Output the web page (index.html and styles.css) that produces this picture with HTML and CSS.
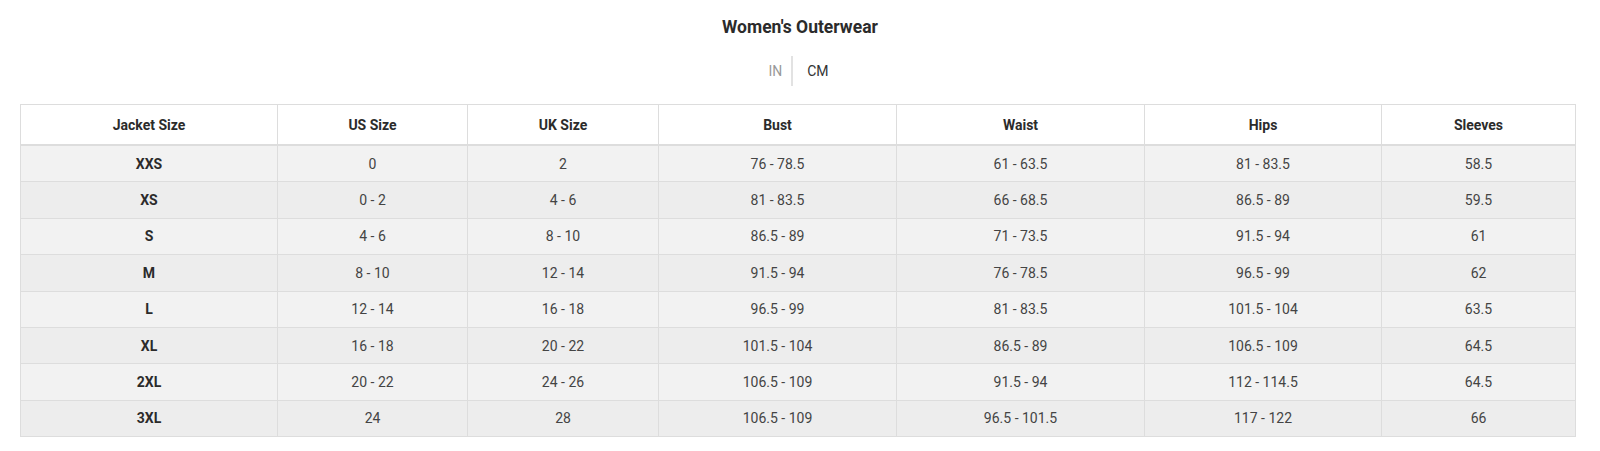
FILE: index.html
```html
<!DOCTYPE html>
<html>
<head>
<meta charset="utf-8">
<link rel="stylesheet" href="styles.css">
</head>
<body>
<div class="page">
  <h2 class="title">Women's Outerwear</h2>
  <div class="units">
    <span class="unit unit-off">IN</span>
    <span class="unit unit-on">CM</span>
  </div>
  <table class="chart">
    <colgroup>
      <col class="c1"><col class="c2"><col class="c3"><col class="c4"><col class="c5"><col class="c6"><col class="c7">
    </colgroup>
    <thead>
      <tr><th>Jacket Size</th><th>US Size</th><th>UK Size</th><th>Bust</th><th>Waist</th><th>Hips</th><th>Sleeves</th></tr>
    </thead>
    <tbody>
      <tr><th>XXS</th><td>0</td><td>2</td><td>76 - 78.5</td><td>61 - 63.5</td><td>81 - 83.5</td><td>58.5</td></tr>
      <tr><th>XS</th><td>0 - 2</td><td>4 - 6</td><td>81 - 83.5</td><td>66 - 68.5</td><td>86.5 - 89</td><td>59.5</td></tr>
      <tr><th>S</th><td>4 - 6</td><td>8 - 10</td><td>86.5 - 89</td><td>71 - 73.5</td><td>91.5 - 94</td><td>61</td></tr>
      <tr><th>M</th><td>8 - 10</td><td>12 - 14</td><td>91.5 - 94</td><td>76 - 78.5</td><td>96.5 - 99</td><td>62</td></tr>
      <tr><th>L</th><td>12 - 14</td><td>16 - 18</td><td>96.5 - 99</td><td>81 - 83.5</td><td>101.5 - 104</td><td>63.5</td></tr>
      <tr><th>XL</th><td>16 - 18</td><td>20 - 22</td><td>101.5 - 104</td><td>86.5 - 89</td><td>106.5 - 109</td><td>64.5</td></tr>
      <tr><th>2XL</th><td>20 - 22</td><td>24 - 26</td><td>106.5 - 109</td><td>91.5 - 94</td><td>112 - 114.5</td><td>64.5</td></tr>
      <tr><th>3XL</th><td>24</td><td>28</td><td>106.5 - 109</td><td>96.5 - 101.5</td><td>117 - 122</td><td>66</td></tr>
    </tbody>
  </table>
</div>
</body>
</html>
```
FILE: styles.css
```css
html, body {
  margin: 0;
  padding: 0;
  background: #fff;
}
body {
  font-family: Roboto, "Liberation Sans", sans-serif;
  color: #333;
}
.page {
  padding: 16px 20px 0 20px;
  display: flex;
  flex-direction: column;
  align-items: center;
}
.title {
  margin: 0;
  font-size: 17.5px;
  font-weight: 700;
  line-height: 22px;
  color: #2b2b2b;
}
.units {
  margin-top: 18px;
  display: flex;
  align-items: center;
  height: 30px;
  margin-left: -3px;
}
.unit {
  font-size: 14px;
  line-height: 30px;
}
.unit-off {
  color: #999;
  border-right: 2px solid #e2e2e2;
  padding-right: 9px;
}
.unit-on {
  color: #333;
  padding-left: 14px;
}
.chart {
  margin-top: 18px;
  align-self: flex-start;
  width: 1555px;
  border-collapse: collapse;
  table-layout: fixed;
  font-size: 14px;
}
.c1 { width: 257px; }
.c2 { width: 190px; }
.c3 { width: 191px; }
.c4 { width: 238px; }
.c5 { width: 248px; }
.c6 { width: 237px; }
.c7 { width: 194px; }
.chart th, .chart td {
  border: 1px solid #ddd;
  text-align: center;
  padding: 0;
  height: 35.4px;
}
.chart thead th {
  background: #fff;
  height: 39px;
  font-weight: 700;
  border-bottom: 2px solid #ddd;
  color: #2b2b2b;
}
.chart tbody th {
  font-weight: 700;
  color: #2b2b2b;
}
.chart tbody tr:nth-child(odd) {
  background: #f2f2f2;
}
.chart tbody tr:nth-child(even) {
  background: #ededed;
}
.chart td {
  color: #444;
}
```
